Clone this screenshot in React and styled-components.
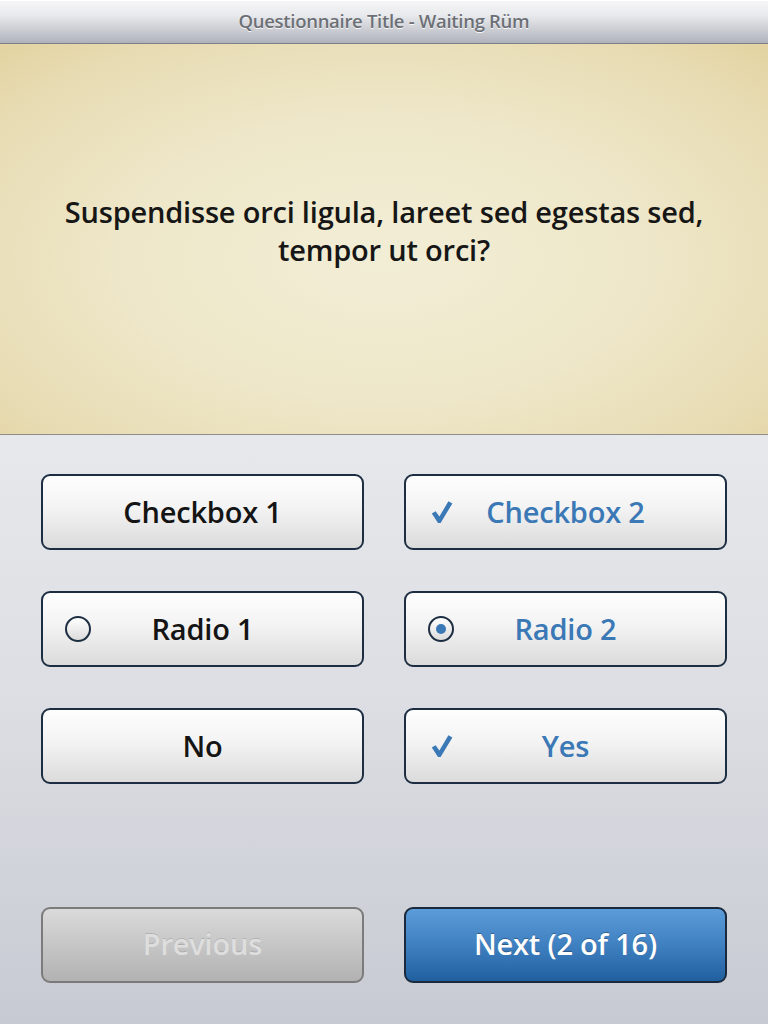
import React from "react";
import styled, { createGlobalStyle, css } from "styled-components";

const GlobalStyle = createGlobalStyle`
  html, body {
    margin: 0;
    padding: 0;
  }
  body {
    font-family: "Open Sans", "Liberation Sans", sans-serif;
    background: #c8cbd3;
  }
`;

const answers = [
  { label: "Checkbox 1", kind: "check", selected: false },
  { label: "Checkbox 2", kind: "check", selected: true },
  { label: "Radio 1", kind: "radio", selected: false },
  { label: "Radio 2", kind: "radio", selected: true },
  { label: "No", kind: "check", selected: false },
  { label: "Yes", kind: "check", selected: true },
];

const CheckMark = () => (
  <svg width="22" height="24" viewBox="0 0 22 24">
    <path
      d="M0.8 13.6 L4.6 11.2 L8.4 16.6 L17.4 1.2 L21.4 3.4 L9.6 23 L7 23 Z"
      fill="#3a78b6"
    />
  </svg>
);

const Indicator = ({ kind, selected }) => {
  if (kind === "radio") {
    return <RadioRing>{selected && <RadioDot />}</RadioRing>;
  }
  return selected ? <CheckMark /> : null;
};

export default function App() {
  return (
    <>
      <GlobalStyle />
      <Screen>
        <TitleBar>Questionnaire Title - Waiting Rüm</TitleBar>
        <QuestionPanel>
          <Question>
            Suspendisse orci ligula, lareet sed egestas sed,
            <br />
            tempor ut orci?
          </Question>
        </QuestionPanel>
        <AnswerArea>
          <AnswerGrid>
            {answers.map((a) => (
              <Choice key={a.label}>
                <IconSlot $kind={a.kind}>
                  <Indicator kind={a.kind} selected={a.selected} />
                </IconSlot>
                <ChoiceLabel $selected={a.selected}>{a.label}</ChoiceLabel>
                <span />
              </Choice>
            ))}
          </AnswerGrid>
          <NavRow>
            <NavButton $variant="disabled">Previous</NavButton>
            <NavButton $variant="primary">Next (2 of 16)</NavButton>
          </NavRow>
        </AnswerArea>
      </Screen>
    </>
  );
}

const Screen = styled.div`
  width: 768px;
  height: 1024px;
  display: flex;
  flex-direction: column;
  overflow: hidden;
`;

const TitleBar = styled.div`
  height: 44px;
  flex-shrink: 0;
  box-sizing: border-box;
  padding-bottom: 3px;
  display: flex;
  align-items: center;
  justify-content: center;
  border-bottom: 1px solid #7c8089;
  background: linear-gradient(#f6f6f8 0%, #e9eaed 35%, #c6c8cf 75%, #afb2bb 100%);
  box-shadow: inset 0 1px 0 #ffffff;
  color: #6c7076;
  font-size: 18.5px;
  font-weight: 600;
  letter-spacing: -0.3px;
  text-shadow: 0 1px 0 rgba(255, 255, 255, 0.85);
`;

const QuestionPanel = styled.div`
  height: 391px;
  flex-shrink: 0;
  display: flex;
  align-items: center;
  justify-content: center;
  padding-bottom: 16px;
  box-sizing: border-box;
  border-bottom: 1px solid #8d8c88;
  background: radial-gradient(
    ellipse 75% 80% at 50% 55%,
    #f2eed6 0%,
    #eee7c9 45%,
    #e7dbb2 80%,
    #e2d19c 100%
  );
`;

const Question = styled.h1`
  margin: 0;
  text-align: center;
  color: #161616;
  font-size: 29px;
  line-height: 38px;
  font-weight: 600;
  letter-spacing: -0.2px;
`;

const AnswerArea = styled.div`
  flex: 1;
  display: flex;
  flex-direction: column;
  padding: 39px 41px 41px;
  background: linear-gradient(#e7e8ec 0%, #dcdee3 45%, #c7cad2 100%);
`;

const AnswerGrid = styled.div`
  display: grid;
  grid-template-columns: 1fr 1fr;
  column-gap: 40px;
  row-gap: 41px;
`;

const buttonBase = css`
  box-sizing: border-box;
  height: 76px;
  border-radius: 9px;
  font-family: "Open Sans", "Liberation Sans", sans-serif;
  font-size: 29px;
  font-weight: 600;
  letter-spacing: -0.2px;
`;

const Choice = styled.div`
  ${buttonBase};
  display: grid;
  grid-template-columns: 1fr auto 1fr;
  align-items: center;
  padding-bottom: 1px;
  border: 2px solid #1d2e42;
  background: linear-gradient(#fefefe 0%, #f3f3f3 45%, #dbdbdb 100%);
`;

const IconSlot = styled.div`
  display: flex;
  align-items: center;
  padding-left: ${(p) => (p.$kind === "radio" ? "22px" : "25px")};
`;

const ChoiceLabel = styled.span`
  color: ${(p) => (p.$selected ? "#3a78b6" : "#141414")};
`;

const RadioRing = styled.div`
  box-sizing: border-box;
  width: 26px;
  height: 26px;
  border-radius: 50%;
  border: 2px solid #1d2e42;
  background: linear-gradient(#ffffff, #dcdcdc);
  display: flex;
  align-items: center;
  justify-content: center;
`;

const RadioDot = styled.div`
  width: 10px;
  height: 10px;
  border-radius: 50%;
  background: #3a78b6;
`;

const NavRow = styled.div`
  margin-top: auto;
  display: grid;
  grid-template-columns: 1fr 1fr;
  column-gap: 40px;
`;

const NavButton = styled.div`
  ${buttonBase};
  display: flex;
  align-items: center;
  justify-content: center;
  padding-bottom: 3px;
  ${(p) =>
    p.$variant === "primary"
      ? css`
          border: 2px solid #1a2a3c;
          background: linear-gradient(#5c9cd9 0%, #3f80c1 50%, #21609f 100%);
          color: #ffffff;
          text-shadow: 0 -1px 0 rgba(0, 0, 0, 0.3);
        `
      : css`
          border: 2px solid #7b7b7b;
          background: linear-gradient(#dadada 0%, #c6c6c6 50%, #b2b2b2 100%);
          color: #dedede;
          text-shadow: 0 -1px 0 rgba(0, 0, 0, 0.12);
        `}
`;
